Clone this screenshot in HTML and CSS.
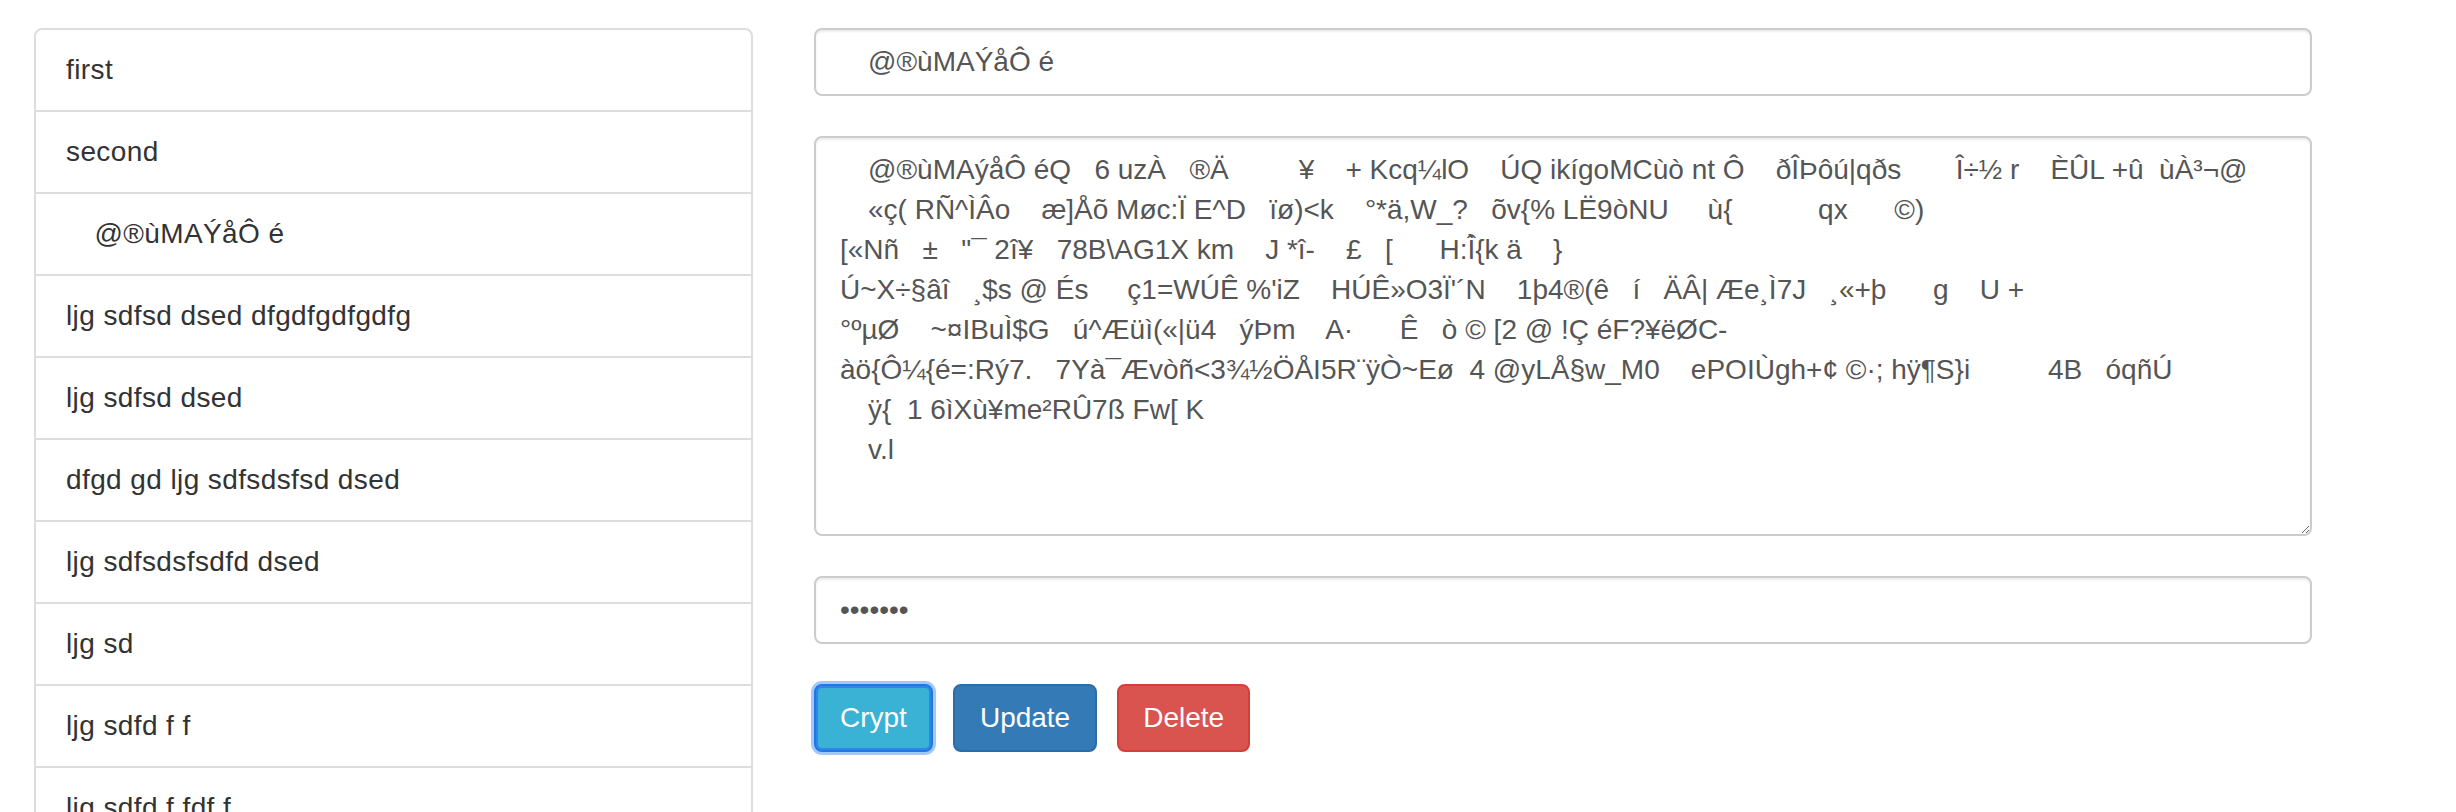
FILE: index.html
```html
<!DOCTYPE html>
<html lang="en">
<head>
<meta charset="utf-8">
<title>Crypt</title>
<link rel="stylesheet" href="styles.css">
</head>
<body>
<div class="page">
  <div class="col-list">
    <ul class="list-group">
      <li class="list-group-item">first</li>
      <li class="list-group-item">second</li>
      <li class="list-group-item">&#8195;@®ùMAÝåÔ é</li>
      <li class="list-group-item">ljg sdfsd dsed dfgdfgdfgdfg</li>
      <li class="list-group-item">ljg sdfsd dsed</li>
      <li class="list-group-item">dfgd gd ljg sdfsdsfsd dsed</li>
      <li class="list-group-item">ljg sdfsdsfsdfd dsed</li>
      <li class="list-group-item">ljg sd</li>
      <li class="list-group-item">ljg sdfd f f</li>
      <li class="list-group-item">ljg sdfd f fdf f</li>
    </ul>
  </div>
  <form class="form">
    <input class="form-control" type="text" value="&#8195;@®ùMAÝåÔ é">
    <textarea class="form-control area" wrap="off">&#8195;@®ùMAýåÔ éQ   6 uzÀ   ®Ä         ¥    + Kcq¼lO    ÚQ ikígoMCùò nt Ô    ðÎÞôú|qðs       Î÷½ r    ÈÛL +û  ùÀ³¬@
&#8195;«ç( RÑ^ÌÂo    æ]Åõ Møc:Ï E^D   ïø)&lt;k    °*ä,W_?   õv{% LË9òNU     ù{           qx      ©)
[«Nñ   ±   "¯ 2î¥   78B\AG1X km    J *î-    £   [      H:Î̀{k ä    }
Ú~X÷§âî   ¸$s @ És     ç1=WÚÊ %'iZ    HÚÊ»O3Ï'´N    1þ4®(ê   í   ÄÂ| Æe¸Ì7J   ¸«+þ      g    U +
°ºµØ    ~¤IBuÌ$G   ú^Æüì(«|ü4   ýÞm    A·      Ê   ò © [2 @ !Ç éF?¥ëØC-
àö{Ô¼{é=:Rý7.   7Yà¯Ævòñ&lt;3¾½ÖÅI5R¨ÿÒ~Eø  4 @yLÅ§w_M0    ePOIÙgh+¢ ©·; hÿ¶S}i          4B   óqñÚ
&#8195;ÿ{  1 6ìXù¥me²RÛ7ß Fw[ K
&#8195;v.l</textarea>
    <input class="form-control" type="password" value="secret1">
    <div class="btn-row">
      <button type="button" class="btn btn-info is-focused">Crypt</button>
      <button type="button" class="btn btn-primary">Update</button>
      <button type="button" class="btn btn-danger">Delete</button>
    </div>
  </form>
</div>
</body>
</html>
```

FILE: styles.css
```css
* {
  box-sizing: border-box;
}

body {
  margin: 0;
  background: #fff;
  color: #333;
  font-family: "Liberation Sans", Arial, sans-serif;
  font-size: 28px;
  line-height: 40px;
}

.page {
  display: flex;
  align-items: flex-start;
  gap: 61px;
  padding: 28px 0 0 34px;
}

.col-list {
  width: 719px;
  flex: none;
}

.list-group {
  margin: 0;
  padding: 0;
  list-style: none;
}

.list-group-item {
  display: block;
  padding: 20px 30px;
  margin-bottom: -2px;
  background: #fff;
  border: 2px solid #ddd;
  letter-spacing: 0.4px;
  white-space: nowrap;
}

.list-group-item:first-child {
  border-radius: 8px 8px 0 0;
}

.form {
  width: 1498px;
  flex: none;
  margin: 0;
  display: flex;
  flex-direction: column;
  gap: 40px;
}

.form-control {
  display: block;
  width: 100%;
  height: 68px;
  margin: 0;
  padding: 12px 24px;
  font-family: "Liberation Sans", Arial, sans-serif;
  font-size: 28px;
  line-height: 40px;
  color: #555;
  background: #fff;
  border: 2px solid #ccc;
  border-radius: 8px;
  box-shadow: inset 0 2px 2px rgba(0, 0, 0, 0.075);
  outline: none;
}

.area {
  height: 400px;
  resize: vertical;
  overflow: hidden;
  white-space: pre;
}

.btn-row {
  display: flex;
  gap: 20px;
}

.btn {
  margin: 0;
  padding: 12px 24px;
  font-family: "Liberation Sans", Arial, sans-serif;
  font-size: 28px;
  line-height: 40px;
  color: #fff;
  border: 2px solid transparent;
  border-radius: 8px;
  cursor: pointer;
}

.btn-info {
  background: #39b2d6;
  border-color: #1f78e6;
}

.btn-info.is-focused {
  box-shadow: inset 0 0 0 2px #2f86ea, 0 0 0 3px #a3c8f8;
}

.btn-primary {
  padding: 12px 25px;
  background: #337ab7;
  border-color: #2e6da4;
}

.btn-danger {
  background: #d9534f;
  border-color: #d43f3a;
}
```
